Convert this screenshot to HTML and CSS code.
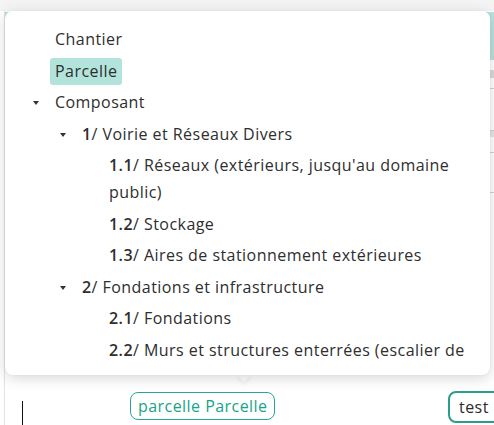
FILE: index.html
```html
<!DOCTYPE html>
<html lang="fr">
<head>
<meta charset="utf-8">
<link rel="stylesheet" href="styles.css">
</head>
<body>
<div class="top-strip"></div>
<div class="panel">
  <div class="table">
    <div class="thead"></div>
    <div class="row gray"></div>
    <div class="row line" style="height:11px"></div>
    <div class="row line" style="height:42px"></div>
    <div class="row gray-thin"></div>
    <div class="row line" style="height:16px"></div>
    <div class="row line" style="height:40px"></div>
  </div>
  <div class="bottom">
    <span class="cursor"></span>
    <span class="tag tag-teal">parcelle Parcelle</span>
    <span class="tag tag-dark">test</span>
  </div>
</div>

<div class="popup">
  <div class="popup-body">
    <ul class="tree">
      <li class="node l1"><span class="slot"></span><span class="label">Chantier</span></li>
      <li class="node l1"><span class="slot"></span><span class="label selected">Parcelle</span></li>
      <li class="node l1"><span class="slot"><i class="caret"></i></span><span class="label">Composant</span></li>
      <li class="node l2"><span class="slot"><i class="caret"></i></span><span class="label"><b>1</b>/ Voirie et Réseaux Divers</span></li>
      <li class="node l3"><span class="slot"></span><span class="label"><b>1.1</b>/ Réseaux (extérieurs, jusqu'au domaine public)</span></li>
      <li class="node l3"><span class="slot"></span><span class="label"><b>1.2</b>/ Stockage</span></li>
      <li class="node l3"><span class="slot"></span><span class="label"><b>1.3</b>/ Aires de stationnement extérieures</span></li>
      <li class="node l2"><span class="slot"><i class="caret"></i></span><span class="label"><b>2</b>/ Fondations et infrastructure</span></li>
      <li class="node l3"><span class="slot"></span><span class="label"><b>2.1</b>/ Fondations</span></li>
      <li class="node l3"><span class="slot"></span><span class="label"><b>2.2</b>/ Murs et structures enterrées (escalier de secours, cuvelage)</span></li>
      <li class="node l3"><span class="slot"></span><span class="label"><b>2.3</b>/ Parois de soutènement</span></li>
    </ul>
  </div>
  <span class="arrow"></span>
</div>
</body>
</html>
```

FILE: styles.css
```css
* { box-sizing: border-box; }

html, body {
  margin: 0;
  padding: 0;
}

body {
  width: 494px;
  height: 425px;
  overflow: hidden;
  background: #ffffff;
  font-family: "Open Sans", "Noto Sans", sans-serif;
  color: #2e2e2e;
  position: relative;
}

.top-strip {
  height: 11px;
  background: #f4f4f4;
}

.panel {
  margin-left: 4px;
  border-left: 1px solid #e4e4e4;
  height: 414px;
  display: flex;
  flex-direction: column;
}

.table {
  display: flex;
  flex-direction: column;
  height: 370px;
}

.thead {
  margin-top: 1px;
  height: 48px;
  background: #b7e3dc;
}

.row { border-bottom: 1px solid #d0d0d0; }
.row.gray { margin-top: 10px; height: 8px; background: #d9d9d9; border-bottom: none; }
.row.gray-thin { height: 6px; background: #e6e6e6; border-bottom: none; }

.bottom {
  flex: 1;
  display: flex;
  align-items: flex-start;
  padding-top: 11px;
  overflow: visible;
}

.cursor {
  flex: 0 0 1px;
  height: 24px;
  background: #111;
  margin-left: 17px;
  margin-top: 10px;
}

.tag {
  font-size: 16px;
  letter-spacing: 0.45px;
  line-height: 26px;
  border-radius: 8px;
  white-space: nowrap;
}

.tag-teal {
  margin-left: 107px;
  margin-top: 1px;
  border: 1.5px solid #27a68f;
  color: #17a488;
  padding: 0 6px 0 7px;
}

.tag-dark {
  flex: 0 0 80px;
  margin-left: auto;
  margin-right: -34px;
  border: 2px solid #2a9e8a;
  color: #2b2b2b;
  padding: 1px 0 1px 9px;
}

/* Popup */
.popup {
  position: absolute;
  left: 5px;
  top: 11px;
  width: 485px;
  height: 364px;
  background: #fff;
  border-radius: 8px;
  box-shadow: 0 3px 14px rgba(0, 0, 0, 0.16), 0 0 2px rgba(0, 0, 0, 0.06);
}

.popup-body {
  height: 100%;
  overflow: hidden;
  border-radius: 8px;
  padding: 15px 18px 0 0;
}

.arrow {
  position: absolute;
  left: 234px;
  bottom: -5px;
  width: 10px;
  height: 10px;
  background: #fff;
  transform: rotate(45deg);
  box-shadow: 2px 2px 4px rgba(0, 0, 0, 0.06);
  z-index: -1;
}

.tree {
  list-style: none;
  margin: 0;
  padding: 0;
  height: 337px;
  overflow: hidden;
}

.node {
  display: flex;
  align-items: flex-start;
  margin-bottom: 4.5px;
  font-size: 16px;
  letter-spacing: 0.45px;
  line-height: 27px;
}

.node.l1 { padding-left: 19px; }
.node.l2 { padding-left: 46px; }
.node.l3 { padding-left: 73px; }

.slot {
  flex: 0 0 26px;
  height: 27px;
  display: flex;
  align-items: center;
  padding-left: 9px;
}

.caret {
  display: block;
  width: 0;
  height: 0;
  border-left: 3.5px solid transparent;
  border-right: 3.5px solid transparent;
  border-top: 4px solid #333;
  margin-top: 1px;
}

.label {
  padding: 0 5px;
  border-radius: 3px;
}

.label b { font-weight: 600; }

.label.selected {
  background: #b3e4dc;
}
```
